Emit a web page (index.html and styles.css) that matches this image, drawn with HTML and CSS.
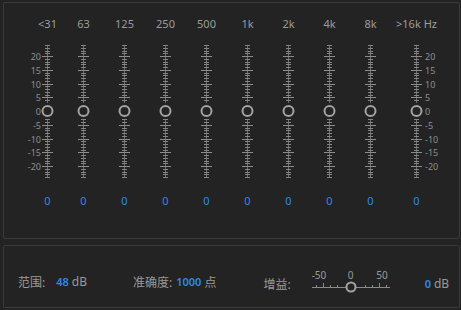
FILE: index.html
```html
<!DOCTYPE html>
<html lang="zh-CN">
<head>
    <meta charset="UTF-8">
    <title>图形均衡器</title>
    <link rel="stylesheet" href="styles.css">
</head>
<body>
<div class="panel eq">
    <div class="row">
        <div class="axis left">
            <span>20</span><span>15</span><span>10</span><span>5</span><span>0</span><span>-5</span><span>-10</span><span>-15</span><span>-20</span>
        </div>
        <div class="band"><span class="freq">&lt;31</span><svg class="track"></svg><span class="val">0</span></div>
        <div class="band b2"><span class="freq">63</span><svg class="track"></svg><span class="val">0</span></div>
        <div class="band"><span class="freq">125</span><svg class="track"></svg><span class="val">0</span></div>
        <div class="band"><span class="freq">250</span><svg class="track"></svg><span class="val">0</span></div>
        <div class="band"><span class="freq">500</span><svg class="track"></svg><span class="val">0</span></div>
        <div class="band"><span class="freq">1k</span><svg class="track"></svg><span class="val">0</span></div>
        <div class="band"><span class="freq">2k</span><svg class="track"></svg><span class="val">0</span></div>
        <div class="band"><span class="freq">4k</span><svg class="track"></svg><span class="val">0</span></div>
        <div class="band"><span class="freq">8k</span><svg class="track"></svg><span class="val">0</span></div>
        <div class="band b10"><span class="freq">&gt;16k Hz</span><svg class="track"></svg><span class="val">0</span></div>
        <div class="axis right">
            <span>20</span><span>15</span><span>10</span><span>5</span><span>0</span><span>-5</span><span>-10</span><span>-15</span><span>-20</span>
        </div>
    </div>
</div>
<div class="panel opts">
    <span class="lbl">范围:</span><span class="num">48</span><span class="unit">dB</span>
    <span class="lbl acc">准确度:</span><span class="num">1000</span><span class="unit">点</span>
    <span class="lbl gain-lbl">增益:</span>
    <div class="gain">
        <div class="gain-marks"><span class="m1">-50</span><span>0</span><span class="m3">50</span></div>
        <svg class="gain-track" width="78" height="10"></svg>
    </div>
    <span class="num gain-num">0</span><span class="unit">dB</span>
</div>
<script>
    window.onload = function(){
        var tracks = document.querySelectorAll('.track');
        for(var i=0;i<tracks.length;i++){
            var s = '<line x1="6.5" y1="0" x2="6.5" y2="133" stroke="#6e6e6e"/>';
            for(var d=-24;d<=24;d++){
                var y = Math.round(66 - 2.75*d) + 0.5;
                if(d%5===0){
                    s += '<line x1="1" y1="'+y+'" x2="12" y2="'+y+'" stroke="#8d8d8d"/>';
                }else{
                    s += '<line x1="4" y1="'+y+'" x2="9" y2="'+y+'" stroke="#858585"/>';
                }
            }
            s += '<rect x="0" y="58" width="13" height="16" fill="#232323"/>';
            s += '<circle cx="6.5" cy="66" r="5" fill="#232323" stroke="#a3a3a3" stroke-width="2"/>';
            tracks[i].setAttribute('width', 13);
            tracks[i].setAttribute('height', 133);
            tracks[i].innerHTML = s;
        }

        var gain = document.querySelector('.gain-track');
        var g = '<line x1="0" y1="6.5" x2="78" y2="6.5" stroke="#8a8a8a"/>';
        var xs = [4, 11, 18, 25, 53, 60, 67, 74];
        for(var k=0;k<xs.length;k++){
            var top = (k===1||k===6) ? 2 : 4;
            g += '<line x1="'+(xs[k]+0.5)+'" y1="'+top+'" x2="'+(xs[k]+0.5)+'" y2="6" stroke="#8a8a8a"/>';
        }
        g += '<circle cx="39" cy="6" r="4.5" fill="#232323" stroke="#a3a3a3" stroke-width="2"/>';
        gain.setAttribute('height', 12);
        gain.innerHTML = g;
    }
</script>
</body>
</html>
```

FILE: styles.css
```css
*{margin: 0;padding: 0;box-sizing: border-box;}
body{background: #232323;color: #9a9a9a;font-family: "Noto Sans", "Noto Sans CJK SC", sans-serif;width: 461px;height: 310px;overflow: hidden;}
.panel{border: 1px solid #3a3a3a;border-radius: 2px;margin: 0 1px 0 3px;}
.eq{margin-top: 2px;height: 237px;padding-top: 14px;}
.row{display: flex;}
.axis{display: flex;flex-direction: column;padding-top: 33px;font-size: 9px;color: #8e8e8e;}
.axis span{height: 13.75px;line-height: 13.75px;}
.axis.left{width: 37px;text-align: right;}
.axis.right{margin-left: 2px;text-align: left;}
.band{width: 13px;display: flex;flex-direction: column;align-items: center;margin-left: 28px;}
.axis.left + .band{margin-left: 0;}
.band.b2{margin-left: 23px;}
.band.b10{margin-left: 33px;}
.freq{font-size: 11px;height: 14px;line-height: 14px;white-space: nowrap;color: #9c9c9c;}
.track{display: block;margin-top: 14px;}
.val{font-size: 11px;height: 14px;line-height: 14px;margin-top: 16px;color: #2e8ae6;}
.opts{margin-top: 6px;height: 63px;display: flex;align-items: center;padding: 10px 0 0 14px;font-size: 12px;}
.lbl{color: #999;}
.num{color: #2e8ae6;font-size: 11px;margin-left: 11px;font-weight: 600;}
.unit{margin-left: 3px;color: #999;font-size: 12px;}
.lbl.acc{margin-left: 46px;}
.acc + .num{margin-left: 4px;}
.gain-lbl{margin-left: 47px;margin-top: 4px;}
.gain{margin-left: 21px;width: 78px;display: flex;flex-direction: column;margin-top: -2px;}
.gain-marks{display: grid;grid-template-columns: 1fr auto 1fr;font-size: 10px;line-height: 12px;color: #9a9a9a;}
.gain-marks .m3{justify-self: end;padding-right: 2px;}
.gain-track{display: block;}
.num.gain-num{margin-left: 35px;margin-top: 4px;}
.gain-num + .unit{margin-top: 4px;}
```
